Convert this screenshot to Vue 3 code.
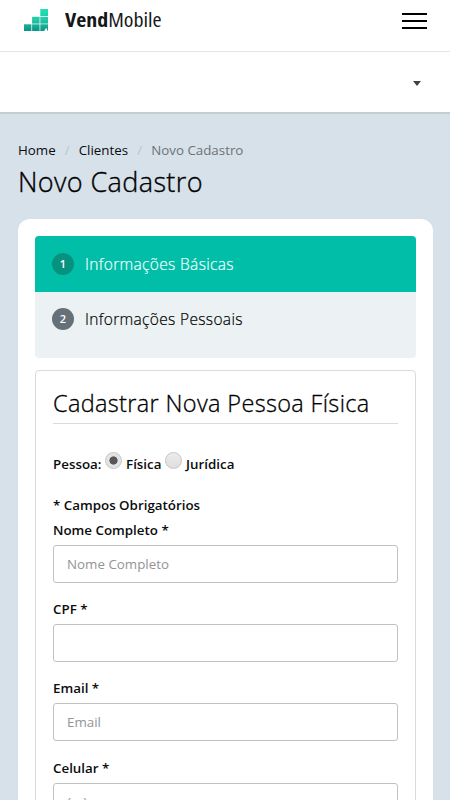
<script setup>
import { ref } from 'vue'

const crumbs = ['Home', 'Clientes', 'Novo Cadastro']
const steps = ['Informações Básicas', 'Informações Pessoais']
const person = ref('fisica')
const fields = ref([
  { id: 'nome', label: 'Nome Completo *', placeholder: 'Nome Completo', value: '' },
  { id: 'cpf', label: 'CPF *', placeholder: '', value: '' },
  { id: 'email', label: 'Email *', placeholder: 'Email', value: '' },
  { id: 'celular', label: 'Celular *', placeholder: '(\u00a0\u00a0\u00a0)', value: '' },
])
</script>

<template>
  <div class="screen">
    <header class="topbar">
      <div class="brand">
        <svg width="24" height="22" viewBox="0 0 24 22">
          <defs>
            <linearGradient id="tile" x1="0" y1="0" x2="0" y2="22" gradientUnits="userSpaceOnUse">
              <stop offset="0" stop-color="#22e0b4" />
              <stop offset="0.5" stop-color="#20c8a6" />
              <stop offset="1" stop-color="#0b9388" />
            </linearGradient>
          </defs>
          <g fill="url(#tile)">
            <rect x="16.3" y="0" width="7.7" height="7" />
            <rect x="8.1" y="7.8" width="7.5" height="6.8" />
            <rect x="16.3" y="7.8" width="7.7" height="6.8" />
            <rect x="0" y="15.3" width="7.4" height="6.7" />
            <rect x="8.1" y="15.3" width="7.5" height="6.7" />
            <path d="M16.300 15.300h7.700v6.300h-1v-2h-1.600v1h-.8v1.400h-4.300z" />
          </g>
        </svg>
        <span class="name"><strong>Vend</strong>Mobile</span>
      </div>
      <button class="menu" aria-label="Menu"><i /><i /><i /></button>
    </header>
    <div class="userbar"><span class="caret" /></div>

    <main>
      <nav class="crumbs">
        <template v-for="(c, i) in crumbs" :key="c">
          <span v-if="i" class="slash">/</span>
          <span :class="{ current: i === crumbs.length - 1 }">{{ c }}</span>
        </template>
      </nav>
      <h1>Novo Cadastro</h1>

      <section class="card">
        <ol class="steps">
          <li v-for="(s, i) in steps" :key="s" :class="{ active: i === 0 }">
            <b>{{ i + 1 }}</b><span>{{ s }}</span>
          </li>
        </ol>

        <form class="panel">
          <h2>Cadastrar Nova Pessoa Física</h2>
          <div class="person">
            <span>Pessoa:</span>
            <input id="fis" v-model="person" type="radio" value="fisica" />
            <label for="fis">Física</label>
            <input id="jur" v-model="person" type="radio" value="juridica" />
            <label for="jur">Jurídica</label>
          </div>
          <p class="required">* Campos Obrigatórios</p>
          <div v-for="f in fields" :key="f.id" class="field">
            <label :for="f.id">{{ f.label }}</label>
            <input :id="f.id" v-model="f.value" type="text" :placeholder="f.placeholder" />
          </div>
        </form>
      </section>
    </main>
  </div>
</template>

<style>
body { background: #d7e1e9; }
</style>

<style scoped>
* { box-sizing: border-box; }
.screen {
  width: 450px;
  height: 800px;
  overflow: hidden;
  background: #d7e1e9;
  color: #0b0c0e;
  font: 400 13.350px/20px "Open Sans", sans-serif;
}
.topbar {
  height: 52px;
  padding: 9px 23px 0 24px;
  display: flex;
  justify-content: space-between;
  align-items: flex-start;
  background: #fff;
  border-bottom: 1px solid #e3e5e6;
}
.brand { display: flex; gap: 17px; }
.brand svg { display: block; }
.name {
  font-size: 19px;
  line-height: 23px;
  font-stretch: 75%;
  transform: scaleX(1.155);
  transform-origin: left;
  color: #15181a;
  white-space: nowrap;
}
.name strong { font-weight: 700; }
.menu {
  width: 25px;
  margin: 4px 0 0;
  padding: 0;
  border: 0;
  background: none;
  display: flex;
  flex-direction: column;
  gap: 5px;
}
.menu i { height: 2px; background: #000; }
.userbar {
  height: 62px;
  padding: 0 29px 0 0;
  display: flex;
  justify-content: flex-end;
  align-items: center;
  background: #fff;
  border-bottom: 2px solid #c6cdd1;
}
.caret {
  margin-top: 2px;
  border: 4px solid transparent;
  border-top: 5px solid #3f4347;
  border-bottom: 0;
}
main { padding: 26px 17px 0 18px; }
.crumbs { display: flex; height: 20px; line-height: 21px; }
.slash { width: 23px; text-align: center; color: #bcc5cc; }
.current { color: #6d7276; }
h1 {
  margin: 4px 0 19px;
  font-size: 27px;
  line-height: 35px;
  height: 36px;
  font-weight: 300;
  letter-spacing: 0.380px;
  color: #000;
  -webkit-text-stroke: 0.350px #000;
}
.card {
  height: 700px;
  padding: 17px;
  background: #fff;
  border-radius: 12px;
}
.steps {
  margin: 0 0 12px;
  padding: 0;
  height: 121.500px;
  list-style: none;
  background: #ecf2f3;
  border-radius: 4px;
  overflow: hidden;
}
.steps li {
  height: 55.500px;
  padding-left: 17px;
  display: flex;
  align-items: center;
  gap: 11px;
  font-size: 15.500px;
  font-weight: 300;
  letter-spacing: 0.340px;
  color: #000;
}
.steps li span { -webkit-text-stroke: 0.200px currentColor; }
.steps b {
  width: 22px;
  height: 22px;
  border-radius: 50%;
  background: #667078;
  color: #fff;
  font-size: 11px;
  font-weight: 600;
  line-height: 22px;
  letter-spacing: 0;
  text-align: center;
}
.steps .active { background: #00bea8; color: #f2fffc; }
.steps .active b { background: #07917f; }
.panel {
  height: 560px;
  padding: 16.500px 17px;
  border: 1px solid #d9dcdd;
  border-radius: 4px;
}
h2 {
  margin: 0 0 29px;
  height: 37px;
  border-bottom: 1px solid #d9dcdd;
  font-size: 23.500px;
  line-height: 33px;
  font-weight: 300;
  letter-spacing: 0.340px;
  color: #000;
  -webkit-text-stroke: 0.300px #000;
}
.person {
  display: flex;
  align-items: center;
  height: 22px;
  font-weight: 600;
}
.person input {
  appearance: none;
  width: 17px;
  height: 17px;
  margin: -8px 3.800px 0;
  border: 1px solid #c6c6c6;
  border-radius: 50%;
  background: linear-gradient(#ececec, #dedede);
}
.person input:checked { background: radial-gradient(circle, #575757 0 3.700px, #e3e3e3 4.500px); }
.required { margin: 20px 0 5px; font-weight: 600; }
.field { height: 79.200px; }
.field label { display: block; height: 25px; font-weight: 600; }
.field input {
  display: block;
  width: 100%;
  height: 37.500px;
  padding: 0 13px;
  border: 1px solid #bfc2c3;
  border-radius: 3px;
  background: #fff;
  font: inherit;
  color: inherit;
}
.field input::placeholder { color: #929496; opacity: 1; }
#celular { padding-top: 2px; letter-spacing: 0.500px; }
</style>
